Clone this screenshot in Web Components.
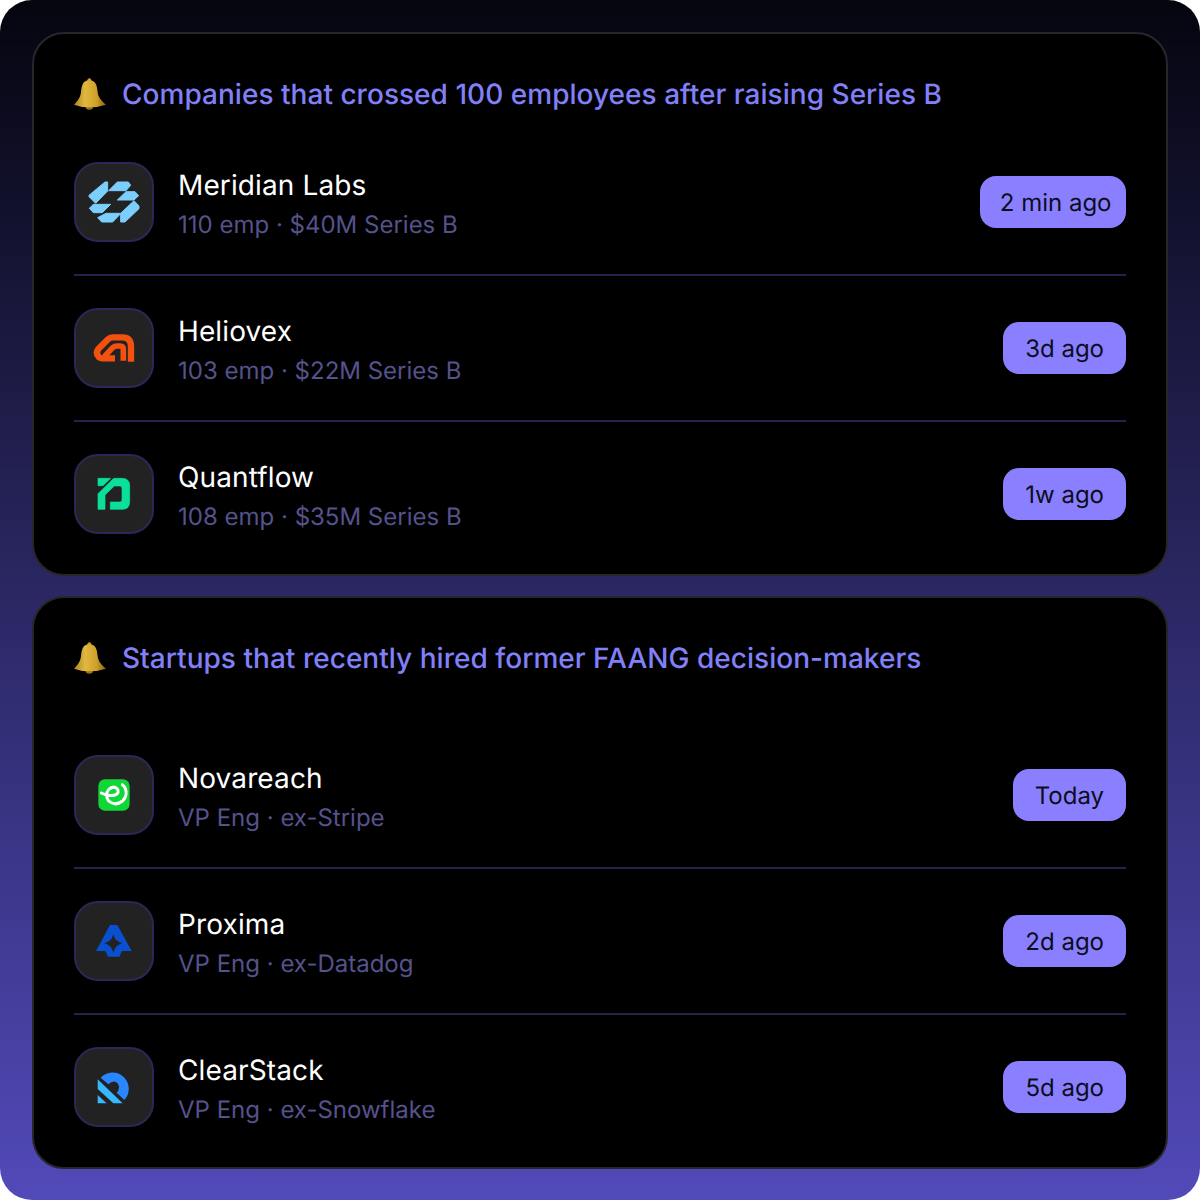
<!DOCTYPE html>
<html lang="en">
<head>
<meta charset="utf-8">
<title>Signals</title>
<style>
  html, body { margin: 0; padding: 0; background: #fff; }
</style>
</head>
<body>
<signal-board>
  <signal-card heading="Companies that crossed 100 employees after raising Series B">
    <signal-row name="Meridian Labs" meta="110 emp · $40M Series B" time="2 min ago" style="--time-left: 19.5px; --time-right: 14.5px"><company-logo kind="meridian"></company-logo></signal-row>
    <signal-row name="Heliovex" meta="103 emp · $22M Series B" time="3d ago"><company-logo kind="heliovex"></company-logo></signal-row>
    <signal-row name="Quantflow" meta="108 emp · $35M Series B" time="1w ago"><company-logo kind="quantflow"></company-logo></signal-row>
  </signal-card>
  <signal-card heading="Startups that recently hired former FAANG decision-makers" style="--head-gap: 77px">
    <signal-row name="Novareach" meta="VP Eng · ex-Stripe" time="Today"><company-logo kind="novareach"></company-logo></signal-row>
    <signal-row name="Proxima" meta="VP Eng · ex-Datadog" time="2d ago"><company-logo kind="proxima"></company-logo></signal-row>
    <signal-row name="ClearStack" meta="VP Eng · ex-Snowflake" time="5d ago"><company-logo kind="clearstack"></company-logo></signal-row>
  </signal-card>
</signal-board>

<script>
class SignalBoard extends HTMLElement {
  constructor() {
    super();
    this.attachShadow({ mode: "open" });
    this.shadowRoot.innerHTML = `
      <style>
        :host {
          display: flex;
          flex-direction: column;
          gap: 20px;
          box-sizing: border-box;
          width: 1200px;
          height: 1200px;
          padding: 32px 32px 31px;
          border-radius: 32px;
          background: linear-gradient(180deg, #05050f 0%, #514ab9 100%);
          font-family: Inter, "Liberation Sans", sans-serif;
          text-rendering: geometricPrecision;
          overflow: hidden;
        }
      </style>
      <slot></slot>
    `;
  }
}

class SignalCard extends HTMLElement {
  constructor() {
    super();
    this.attachShadow({ mode: "open" });
  }

  connectedCallback() {
    this.shadowRoot.innerHTML = `
      <style>
        :host {
          display: block;
          box-sizing: border-box;
          padding: 40px;
          background: #000;
          border: 2px solid #26262c;
          border-radius: 32px;
        }
        .head {
          display: flex;
          align-items: center;
          gap: 16px;
          height: 40px;
          margin-bottom: var(--head-gap, 48px);
          color: #8280f8;
          font-size: 28px;
          font-weight: 500;
          letter-spacing: .03px;
          line-height: 40px;
        }
        svg { display: block; width: 32px; height: 32px; flex: none; }
        .list { display: flex; flex-direction: column; }
        ::slotted(signal-row:not(:last-child)) {
          padding-bottom: 32px;
          margin-bottom: 32px;
          border-bottom: 2px solid #26244f;
        }
      </style>
      <div class="head">
        <svg viewBox="42 30 96 96" aria-hidden="true">
          <defs>
            <linearGradient id="gold" x1="0" x2="1" y1="0" y2="0">
              <stop offset="0" stop-color="#a8851f"/>
              <stop offset=".35" stop-color="#e0b93f"/>
              <stop offset=".7" stop-color="#cfa02a"/>
              <stop offset="1" stop-color="#86660f"/>
            </linearGradient>
          </defs>
          <circle cx="88" cy="37" r="6" fill="#c99c28"/>
          <ellipse cx="88" cy="117" rx="11" ry="8" fill="#9a7415"/>
          <path fill="url(#gold)" d="M88 37C68 37 65 54 63 72C61 90 52 100 42 110Q62 118 88 118Q114 118 138 110C126 100 115 90 113 72C111 54 108 37 88 37Z"/>
        </svg>
        <span>${this.getAttribute("heading")}</span>
      </div>
      <div class="list"><slot></slot></div>
    `;
  }
}

class SignalRow extends HTMLElement {
  constructor() {
    super();
    this.attachShadow({ mode: "open" });
  }

  connectedCallback() {
    this.shadowRoot.innerHTML = `
      <style>
        :host { display: flex; align-items: center; gap: 24px; }
        .text { flex: 1; min-width: 0; display: flex; flex-direction: column; gap: 5px; box-sizing: border-box; height: 80px; padding-top: 5px; }
        .name { color: #fff; font-size: 28px; letter-spacing: .12px; line-height: 36px; }
        .meta { color: #55528c; font-size: 24px; line-height: 34px; }
        .time {
          flex: none;
          box-sizing: border-box;
          height: 52px;
          padding: 0 var(--time-right, 22px) 0 var(--time-left, 22px);
          border-radius: 16px;
          background: #8a80ff;
          color: #0d0d1c;
          font-size: 24px;
          line-height: 54px;
        }
      </style>
      <slot></slot>
      <div class="text">
        <div class="name">${this.getAttribute("name")}</div>
        <div class="meta">${this.getAttribute("meta")}</div>
      </div>
      <div class="time">${this.getAttribute("time")}</div>
    `;
  }
}

// logos traced at 3x, so the viewBox is in crop coordinates
const LOGOS = {
  meridian: {
    box: "48 282 228 228",
    art: `<g fill="#7ccefc" stroke="#7ccefc" stroke-width="3" stroke-linejoin="round">
      <path d="M135 336H143V363L107 400L87 380V376Z"/>
      <path d="M172 336H205L212 346L198 362H146Z"/>
      <path d="M198 365H225L236 377L222 390H172Z"/>
      <path d="M100 403H152L127 428H100L88 415Z"/>
      <path d="M138 430H182V431L158 456H125L113 443Z"/>
      <path d="M222 392L237 408V416L195 456H182V430Z"/>
    </g>`,
  },
  heliovex: {
    box: "48 30 228 228",
    art: `<g fill="none" stroke="#f4500f" stroke-linejoin="round">
      <path stroke-width="19" d="M213 185V140Q213 112 188 112H158Q150 112 144 118L115 147Q105 160 117 172Q120 175 128 175H165"/>
      <path stroke-width="17" d="M133 170L158 143Q163 138 172 138H180Q190 138 190 148V182"/>
    </g>`,
  },
  quantflow: {
    box: "48 33 228 228",
    art: `<g fill="#0be09a" stroke="#0be09a" stroke-width="2">
      <path d="M114 100H152L129 122H114Z"/>
      <path d="M161 100H186Q209 100 209 123V170Q209 193 186 193H151V171H180Q186 171 186 165V130Q186 123 180 123H163L135 150V193H114V146Z"/>
    </g>`,
  },
  novareach: {
    box: "48 36 228 228",
    art: `<rect x="115" y="103" width="94" height="94" rx="20" fill="#10d638"/>
      <path fill="none" stroke="#fff" stroke-width="9" stroke-linecap="round" d="M124 144Q145 155 165 150Q180 143 172 132Q160 120 146 134Q133 150 146 168Q165 185 188 168Q204 150 196 130Q192 122 187 119"/>`,
  },
  proxima: {
    box: "48 39 228 228",
    art: `<path fill="#0a4fd0" fill-rule="evenodd" d="M150 105H172L215 183H186L178 200H144L136 183H108ZM160 133Q165 155 187 160Q165 165 160 188Q155 165 133 160Q155 155 160 133Z"/>`,
  },
  clearstack: {
    box: "48 27 228 228",
    art: `<path fill="#2a86ff" d="M122 113A47 47 0 1 1 193 180L170 158Q182 145 174 131Q162 117 145 133Z"/>
      <path fill="#38b6ff" d="M113 118L188 190H160L113 147Z"/>
      <path fill="#38b6ff" d="M113 165L140 190H113Z"/>`,
  },
};

class CompanyLogo extends HTMLElement {
  constructor() {
    super();
    this.attachShadow({ mode: "open" });
  }

  connectedCallback() {
    const logo = LOGOS[this.getAttribute("kind")];
    this.shadowRoot.innerHTML = `
      <style>
        :host {
          display: block;
          flex: none;
          box-sizing: border-box;
          width: 80px;
          height: 80px;
          background: #222;
          border: 2px solid #2a2856;
          border-radius: 24px;
        }
        svg { display: block; width: 76px; height: 76px; }
      </style>
      <svg viewBox="${logo.box}" aria-hidden="true">${logo.art}</svg>
    `;
  }
}

customElements.define("signal-board", SignalBoard);
customElements.define("signal-card", SignalCard);
customElements.define("signal-row", SignalRow);
customElements.define("company-logo", CompanyLogo);
</script>
</body>
</html>
